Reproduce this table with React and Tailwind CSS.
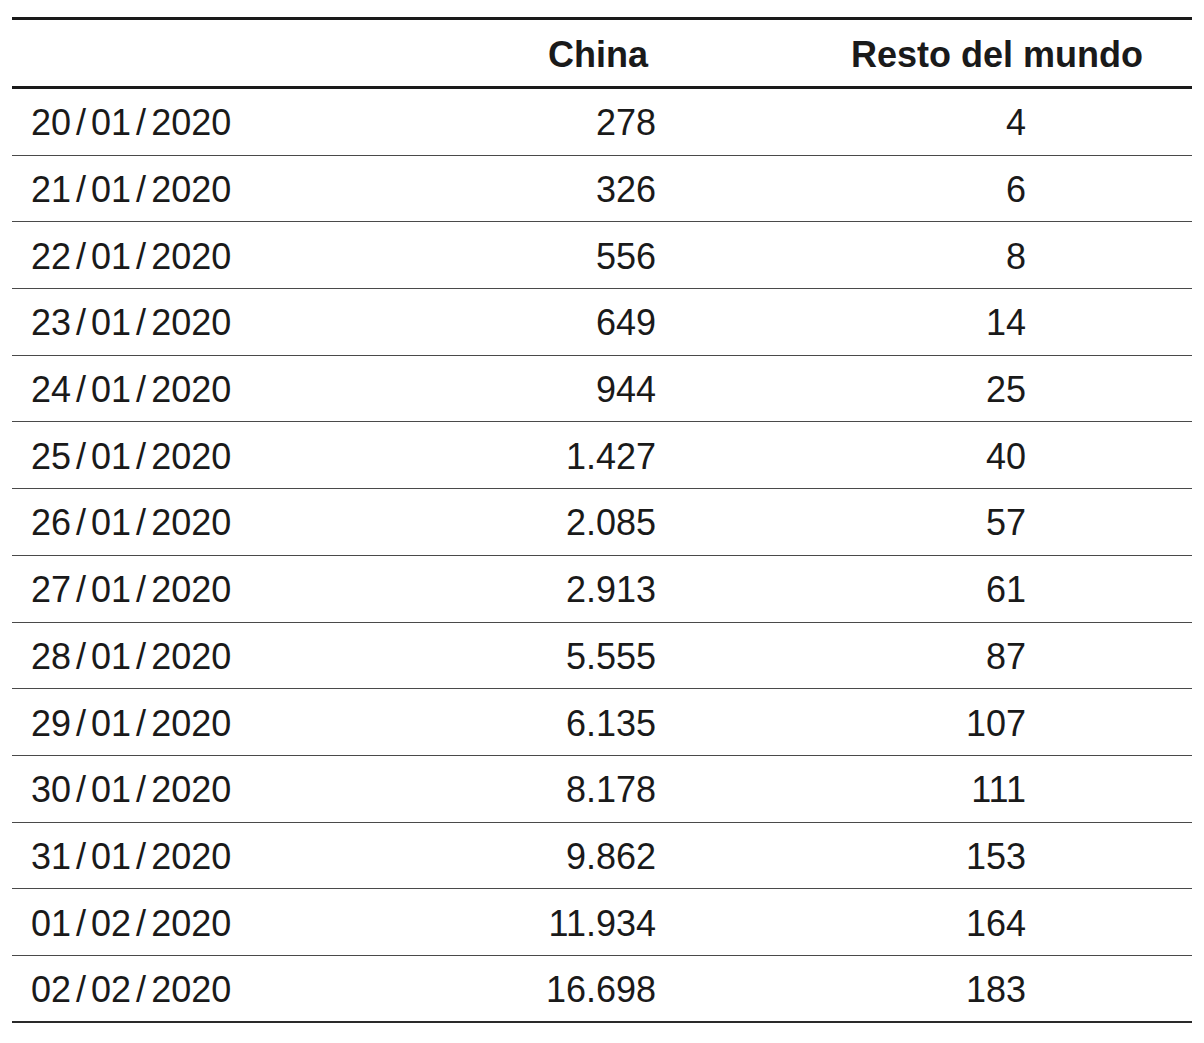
import React from 'react';

const rows = [
  ['20/01/2020', '278', '4'],
  ['21/01/2020', '326', '6'],
  ['22/01/2020', '556', '8'],
  ['23/01/2020', '649', '14'],
  ['24/01/2020', '944', '25'],
  ['25/01/2020', '1.427', '40'],
  ['26/01/2020', '2.085', '57'],
  ['27/01/2020', '2.913', '61'],
  ['28/01/2020', '5.555', '87'],
  ['29/01/2020', '6.135', '107'],
  ['30/01/2020', '8.178', '111'],
  ['31/01/2020', '9.862', '153'],
  ['01/02/2020', '11.934', '164'],
  ['02/02/2020', '16.698', '183'],
];

// slashes in the source font are as wide as the digits
const DateCell = ({ value }) => {
  const parts = value.split('/');
  return (
    <span>
      {parts.map((p, i) => (
        <React.Fragment key={i}>
          {i > 0 && <span className="mx-[5px]">/</span>}
          {p}
        </React.Fragment>
      ))}
    </span>
  );
};

const App = () => {
  return (
    <div className="bg-white min-h-[1043px] w-[1204px] pt-[17px] pl-[12px] font-['Liberation_Sans',Arial,sans-serif] text-[#1a1a1a]">
      <div className="w-[1180px]">
        {/* Header */}
        <div className="flex items-center h-[72px] border-y-[3px] border-[#1a1a1a] text-[36px] font-bold pt-[3px]">
          <div className="w-[300px]"></div>
          <div className="w-[336px] text-right">China</div>
          <div className="w-[495px] text-right">Resto del mundo</div>
        </div>

        {/* Body */}
        {rows.map(([date, china, rest], i) => (
          <div
            key={date}
            className={
              i === rows.length - 1
                ? 'flex items-center h-[66.7px] border-b-2 border-[#2a2a2a] text-[36px] pt-[3px]'
                : 'flex items-center h-[66.7px] border-b-[1.5px] border-[#4a4a4a] text-[36px] pt-[3px]'
            }
          >
            <div className="w-[300px] pl-[19px]">
              <DateCell value={date} />
            </div>
            <div className="w-[344px] text-right">{china}</div>
            <div className="w-[370px] text-right">{rest}</div>
          </div>
        ))}
      </div>
    </div>
  );
};

export default App;
